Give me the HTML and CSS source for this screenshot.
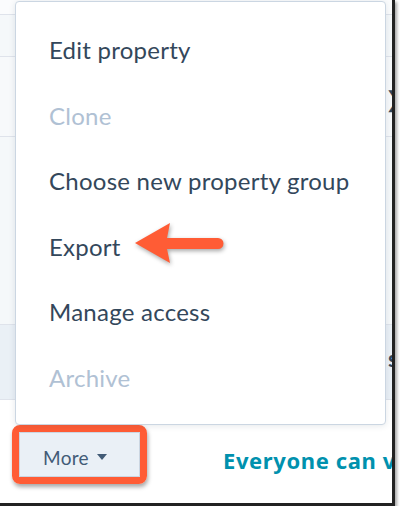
FILE: index.html
```html
<!DOCTYPE html>
<html lang="en">
<head>
  <meta charset="UTF-8">
  <title>More actions</title>
  <link rel="stylesheet" href="styles.css">
</head>
<body>
<div class="frame">
  <div class="table">
    <div class="row row-top"></div>
    <div class="row row-light"></div>
    <div class="row row-mid"><span class="edge-icon">&#x276F;</span></div>
    <div class="row row-body"></div>
    <div class="row row-head"><span class="edge-text">s</span></div>
  </div>

  <div class="footer">
    <div class="highlight">
      <button class="more-btn">More <span class="caret"></span></button>
    </div>
    <div class="access">Everyone can view</div>
  </div>

  <ul class="menu">
    <li class="menu-item">Edit property</li>
    <li class="menu-item disabled">Clone</li>
    <li class="menu-item">Choose new property group</li>
    <li class="menu-item">Export</li>
    <li class="menu-item">Manage access</li>
    <li class="menu-item disabled">Archive</li>
  </ul>

  <svg class="arrow" width="100" height="50" viewBox="0 0 100 50">
    <path d="M5 23 L40 3 L37 18 L88 18 A5.5 5.5 0 0 1 88 29 L37 29 L40 43 Z" fill="#ff5c35"/>
  </svg>
</div>
</body>
</html>
```

FILE: styles.css
```css
body {
  margin: 0;
  background: #fff;
  font-family: "Lato", "Noto Sans", sans-serif;
}

.frame {
  position: relative;
  width: 392px;
  height: 503px;
  overflow: hidden;
  border-right: 3px solid #222;
  border-bottom: 3px solid #222;
  box-shadow: 2px 2px 3px rgba(0, 0, 0, 0.35);
}

.table {
  display: flex;
  flex-direction: column;
}

.row {
  position: relative;
  border-bottom: 1px solid #dfe3eb;
}

.row-top {
  height: 14px;
  background: #fbfcfd;
}

.row-light {
  height: 41px;
  background: #f5f8fa;
}

.row-mid {
  height: 79px;
  background: #f7f9fb;
}

.row-body {
  height: 187px;
  background: #f5f8fa;
}

.row-head {
  height: 74px;
  background: #eaf0f6;
}

.edge-icon {
  position: absolute;
  left: 385px;
  top: 28px;
  font-size: 22px;
  color: #33475b;
}

.edge-text {
  position: absolute;
  left: 388px;
  top: 20px;
  font-size: 22px;
  font-weight: bold;
  color: #33475b;
}

.footer {
  display: flex;
  align-items: center;
  gap: 76px;
  padding: 25px 0 0 12px;
}

.highlight {
  border: 7px solid #ff5c35;
  border-radius: 8px;
  box-shadow: 1px 3px 4px rgba(0, 0, 0, 0.35);
}

.more-btn {
  display: flex;
  align-items: center;
  gap: 8px;
  width: 121px;
  height: 45px;
  padding: 5px 0 0 23px;
  border: 1px solid #cbd6e2;
  background: #eaf0f6;
  color: #425b76;
  font-family: "Lato", "Noto Sans", sans-serif;
  font-size: 19px;
  letter-spacing: 0.3px;
}

.caret {
  width: 0;
  height: 0;
  border-left: 5px solid transparent;
  border-right: 5px solid transparent;
  border-top: 6px solid #425b76;
}

.access {
  margin-top: 10px;
  white-space: nowrap;
  font-family: "Noto Sans", sans-serif;
  font-size: 22px;
  font-weight: bold;
  letter-spacing: 0.6px;
  color: #0091ae;
}

.menu {
  position: absolute;
  left: 15px;
  top: 1px;
  width: 369px;
  margin: 0;
  padding: 15px 0 13px;
  list-style: none;
  background: #fff;
  border: 1px solid #cbd6e2;
  border-radius: 4px;
  box-shadow: 0 1px 6px rgba(45, 62, 80, 0.12);
}

.menu-item {
  height: 65.6px;
  line-height: 65.6px;
  padding-left: 33px;
  font-size: 24px;
  letter-spacing: 0.25px;
  color: #33475b;
}

.menu-item.disabled {
  color: #b0c1d4;
}

.arrow {
  position: absolute;
  left: 130px;
  top: 220px;
  filter: drop-shadow(1px 2px 2px rgba(0, 0, 0, 0.35));
}
```
